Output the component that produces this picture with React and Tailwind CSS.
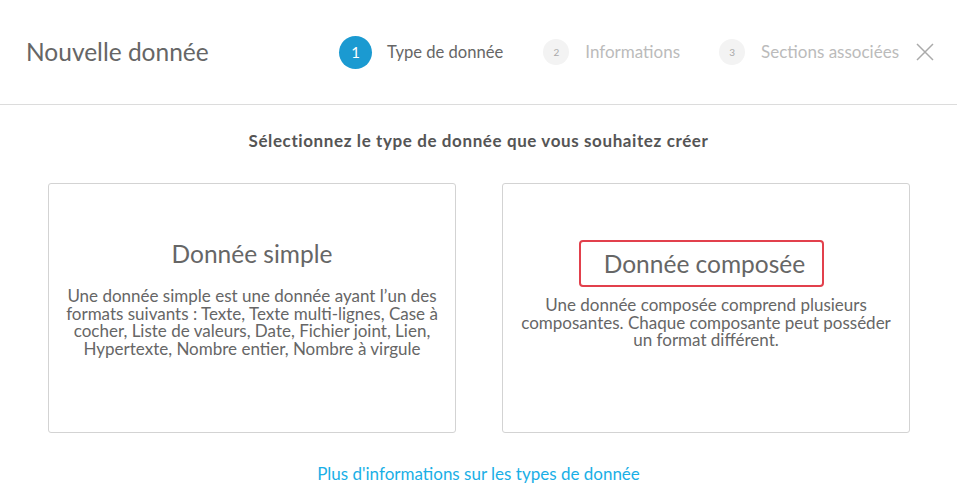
import React from "react";

export default function App() {
  const font = { fontFamily: "Lato, 'Open Sans', sans-serif" };
  return (
    <div className="w-[957px] h-[494px] bg-white overflow-hidden text-[#666]" style={font}>
      <div className="h-[105px] border-b border-[#dcdcdc] flex items-center pl-[26px] pr-[23px]">
        <div className="text-[24.5px] text-[#666] leading-none">Nouvelle donnée</div>
        <div className="ml-auto flex items-center">
          <div className="w-[33px] h-[33px] rounded-full bg-[#1b9ad1] text-white flex items-center justify-center text-[15px]">1</div>
          <div className="ml-[15px] text-[16.6px] text-[#666]">Type de donnée</div>
          <div className="ml-[40px] w-[26px] h-[26px] rounded-full bg-[#f3f3f3] text-[#aaa] flex items-center justify-center text-[10px]">2</div>
          <div className="ml-[16px] text-[17px] text-[#bbb]">Informations</div>
          <div className="ml-[39px] w-[26px] h-[26px] rounded-full bg-[#f3f3f3] text-[#aaa] flex items-center justify-center text-[10px]">3</div>
          <div className="ml-[16px] text-[17px] text-[#bbb]">Sections associées</div>
          <svg className="ml-[17px]" width="18" height="18" viewBox="0 0 18 18" stroke="#aaa" strokeWidth="1.5" fill="none">
            <path d="M1 1L17 17M17 1L1 17" />
          </svg>
        </div>
      </div>
      <div className="pt-[26px] text-center text-[17px] font-bold text-[#555] leading-5 tracking-[0.6px]">
        Sélectionnez le type de donnée que vous souhaitez créer
      </div>
      <div className="mt-[32px] pl-[48px] flex gap-[46px]">
        <div className="w-[408px] h-[250px] border border-[#d3d3d3] rounded-[3px] flex flex-col items-center pt-[51px] px-[14px]">
          <div className="text-[24.5px] leading-[30px] px-[24px] py-[2px] border-2 border-transparent">Donnée simple</div>
          <div className="mt-[14px] text-[17px] leading-[17.5px] text-center">
            Une donnée simple est une donnée ayant l’un des formats suivants : Texte, Texte multi-lignes, Case à cocher, Liste de valeurs, Date, Fichier joint, Lien, Hypertexte, Nombre entier, Nombre à virgule
          </div>
        </div>
        <div className="w-[408px] h-[250px] border border-[#d3d3d3] rounded-[3px] flex flex-col items-center pt-[56px] px-[16px]">
          <div className="mr-[9px] text-[24.5px] leading-[30px] w-[245px] h-[47px] flex items-center justify-center pl-[6px] border-2 border-[#e2404c] rounded-[4px]">Donnée composée</div>
          <div className="mt-[9px] text-[17px] leading-[17.5px] text-center">
            Une donnée composée comprend plusieurs composantes. Chaque composante peut posséder un format différent.
          </div>
        </div>
      </div>
      <div className="mt-[28px] text-center text-[17px] text-[#1aafe6]">Plus d'informations sur les types de donnée</div>
    </div>
  );
}
